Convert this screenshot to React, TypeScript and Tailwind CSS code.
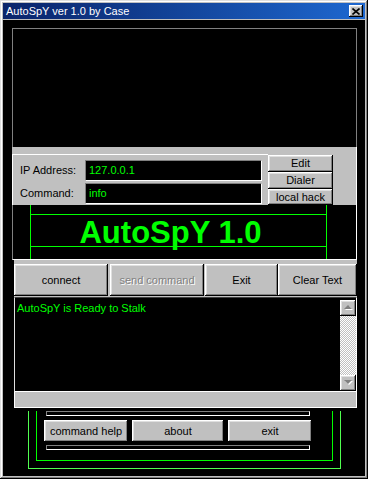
import React from 'react';

const raised =
  'bg-[#c0c0c0] shadow-[inset_-1px_-1px_#000,inset_1px_1px_#fff,inset_-2px_-2px_#808080,inset_2px_2px_#dfdfdf]';
const btnBase = `${raised} flex items-center justify-center text-[11px] leading-none`;
const btn = `${btnBase} text-black`;
const sunken = 'bg-black border-t border-l border-t-[#808080] border-l-[#808080] border-b border-r border-b-white border-r-white';

function Groove() {
  return <div className={`ml-[9px] h-[5px] w-[264px] ${sunken}`} />;
}

function Arrow({ up }: { up?: boolean }) {
  return (
    <div className={`${raised} flex h-[16px] w-[16px] items-center justify-center`}>
      <svg width="9" height="6" viewBox="0 0 9 6">
        {up ? (
          <>
            <path d="M5 1 L9 5 L1 5 Z" fill="#fff" />
            <path d="M4 0 L8 4 L0 4 Z" fill="#808080" />
          </>
        ) : (
          <>
            <path d="M1 1 L9 1 L5 5 Z" fill="#fff" />
            <path d="M0 0 L8 0 L4 4 Z" fill="#808080" />
          </>
        )}
      </svg>
    </div>
  );
}

export default function App() {
  return (
    <div className="flex h-[479px] w-[368px] flex-col bg-[#c0c0c0] p-[3px] font-['Liberation_Sans',Arial,sans-serif] shadow-[inset_-1px_-1px_#000,inset_1px_1px_#dfdfdf,inset_-2px_-2px_#808080,inset_2px_2px_#fff]">
      {/* title bar */}
      <div className="mb-[1px] flex h-[16px] items-center bg-gradient-to-r from-[#0a246a] to-[#1e68d0] pl-[3px] pr-[2px]">
        <span className="flex-1 text-[11px] leading-none text-white">AutoSpY ver 1.0 by Case</span>
        <div className={`${raised} flex h-[12px] w-[14px] items-center justify-center`}>
          <svg width="8" height="7" viewBox="0 0 8 7">
            <path d="M0.5 0.5 L7.5 6.5 M7.5 0.5 L0.5 6.5" stroke="#000" strokeWidth="1.6" />
          </svg>
        </div>
      </div>

      {/* client */}
      <div className="flex flex-1 flex-col bg-black pl-[9px] pt-[8px]">
        {/* output display */}
        <div className="h-[119px] w-[345px] border-l border-r border-t border-[#808080] bg-black" />

        {/* address panel */}
        <div className="h-[58px] w-[345px] border-r border-r-white bg-[#c0c0c0] pt-[7px]">
          <div className="flex h-[51px]">
            <div className="flex w-[256px] flex-col gap-[2px] border-l border-t border-white pt-[5px]">
              <div className="flex h-[21px] items-center">
                <span className="w-[72px] pl-[7px] text-[11px] text-black">IP Address:</span>
                <div className={`flex h-[21px] w-[177px] items-center pl-[3px] text-[11px] text-[#00ff00] ${sunken}`}>127.0.0.1</div>
              </div>
              <div className="flex h-[21px] items-center">
                <span className="w-[72px] pl-[7px] text-[11px] text-black">Command:</span>
                <div className={`flex h-[21px] w-[177px] items-center pl-[3px] text-[11px] text-[#00ff00] ${sunken}`}>info</div>
              </div>
            </div>
            <div className="flex w-[65px] flex-col pt-[1px]">
              <div className={`${btn} h-[17px]`}>Edit</div>
              <div className={`${btn} h-[17px]`}>Dialer</div>
              <div className={`${btn} h-[16px]`}>local hack</div>
            </div>
            <div className="w-[23px]" />
          </div>
        </div>

        {/* banner */}
        <div className="h-[55px] w-[345px] border-b border-l border-r border-b-white border-l-[#808080] border-r-white bg-black pl-[17px]">
          <div className="flex h-full w-[297px] flex-col border-l border-r border-[#00ff00]">
            <div className="h-[9px]" />
            <div className="h-px bg-[#00ff00]" />
            <div className="h-[31px] pr-[16px] pt-[5px] text-center text-[31px] font-bold leading-[26px] text-[#00ff00]">
              AutoSpY 1.0
            </div>
            <div className="h-px bg-[#00ff00]" />
          </div>
        </div>

        {/* controls + log */}
        <div className="ml-[2px] flex w-[343px] flex-col bg-[#c0c0c0] pt-[4px]">
          <div className="flex h-[32px]">
            <div className={`${btn} w-[94px]`}>connect</div>
            <div className={`${btnBase} ml-[2px] w-[94px] text-[#808080] [text-shadow:1px_1px_0_#fff]`}>send command</div>
            <div className={`${btn} ml-[1px] w-[73px]`}>Exit</div>
            <div className={`${btn} w-[79px]`}>Clear Text</div>
          </div>
          <div className="mt-[1px] flex h-[95px] border-b border-l border-r border-t border-b-white border-l-[#dfdfdf] border-r-white border-t-[#404040] bg-black">
            <div className="flex-1 pl-[2px] pt-[4px] text-[11px] leading-[13px] text-[#00ff00]">AutoSpY is Ready to Stalk</div>
            <div className="flex w-[16px] flex-col pt-[2px]">
              <Arrow up />
              <div className="flex-1 bg-[repeating-conic-gradient(#c0c0c0_0%_25%,#ffffff_0%_50%)] bg-[length:2px_2px]" />
              <Arrow />
            </div>
          </div>
          <div className="h-[16px] border-b border-l border-r border-white bg-[#c0c0c0]" />
        </div>

        {/* bottom menu */}
        <div className="pt-[3px]">
          <div className="ml-[16px] h-[58px] w-[313px] border-b border-l border-r border-[#50ff50]">
            <div className="ml-[7px] flex h-[50px] w-[297px] flex-col border-b border-l border-r border-[#00ff00]">
              <Groove />
              <div className="ml-[7px] mt-[4px] flex h-[22px] gap-[4px]">
                <div className={`${btn} w-[84px]`}>command help</div>
                <div className={`${btn} w-[92px]`}>about</div>
                <div className={`${btn} w-[84px]`}>exit</div>
              </div>
              <div className="mt-[3px]">
                <Groove />
              </div>
            </div>
          </div>
        </div>
      </div>
    </div>
  );
}
